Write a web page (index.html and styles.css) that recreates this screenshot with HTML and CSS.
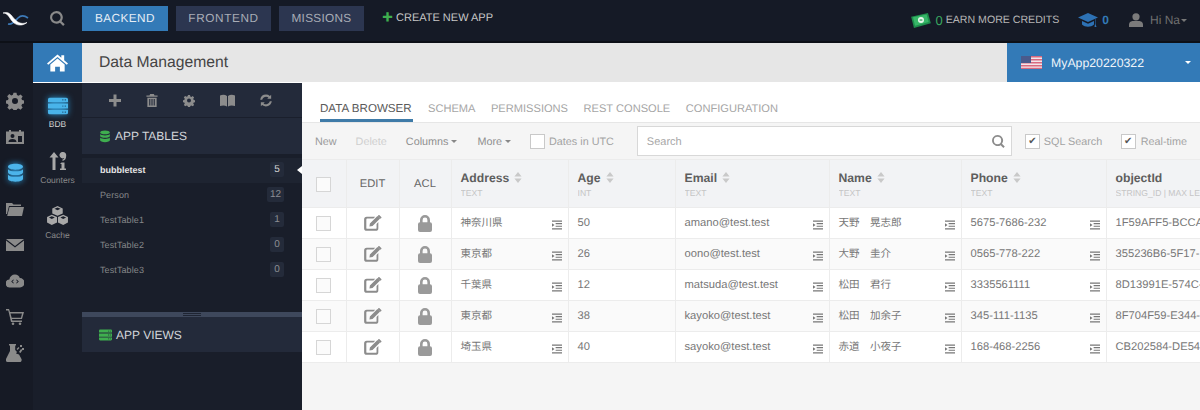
FILE: index.html
```html
<!DOCTYPE html>
<html lang="en">
<head>
<meta charset="utf-8">
<title>Data Management</title>
<link rel="stylesheet" href="styles.css">
</head>
<body>
<svg class="defs" width="0" height="0">
  <symbol id="i-gear" viewBox="0 0 24 24"><path fill-rule="evenodd" d="M10 1h4l.6 3 2.2.9 2.6-1.7 2.8 2.8-1.7 2.6.9 2.2 3 .6v4l-3 .6-.9 2.2 1.700 2.6-2.800 2.800-2.600-1.700-2.200.9-.6 3h-4l-.6-3-2.200-.9-2.600 1.700-2.800-2.800 1.700-2.600-.9-2.200-3-.6v-4l3-.6.9-2.200L1.600 5.600l2.800-2.800 2.600 1.700 2.200-.9zM12 8a4 4 0 1 0 0 8 4 4 0 0 0 0-8z"/></symbol>
  <symbol id="i-db" viewBox="0 0 20 24"><path d="M10 1c5 0 9 1.500 9 3.500S15 8 10 8 1 6.500 1 4.500 5 1 10 1zM1 7.500C2.500 9.500 6 10 10 10s7.500-.5 9-2.500V11c0 2-4 3.500-9 3.500S1 13 1 11zM1 14c1.500 2 5 2.500 9 2.500s7.500-.5 9-2.500v5c0 2-4 3.500-9 3.500S1 21 1 19z"/></symbol>
  <symbol id="i-server" viewBox="0 0 24 20"><path fill-rule="evenodd" d="M2 0h20a2 2 0 0 1 2 2v3.500H0V2a2 2 0 0 1 2-2zM0 7h24v6H0zM0 14.500h24V18a2 2 0 0 1-2 2H2a2 2 0 0 1-2-2zM17 2v1.500h1.500V2zM20 2v1.500h1.500V2zM17 9.300v1.500h1.500V9.300zM20 9.300v1.500h1.500V9.300zM17 16.500V18h1.500v-1.500zM20 16.500V18h1.500v-1.500z"/></symbol>
  <symbol id="i-edit" viewBox="0 0 20 18"><path d="M3 2h9.500l-2 2H3.500a1 1 0 0 0-1 1v9.500a1 1 0 0 0 1 1H13a1 1 0 0 0 1-1V10l2-2v6.800a3 3 0 0 1-3 3H3a3 3 0 0 1-3-3V5a3 3 0 0 1 3-3z"/><path d="M6.500 9.500 15 1l3 3-8.500 8.500L6 13zM16 .2a1 1 0 0 1 1.300 0l2 2a1 1 0 0 1 0 1.300l-.8.800-3-3z"/></symbol>
  <symbol id="i-lock" viewBox="0 0 14 17"><path fill-rule="evenodd" d="M7 0a5 5 0 0 1 5 5v2.200a2 2 0 0 1 2 2V15a2 2 0 0 1-2 2H2a2 2 0 0 1-2-2V9.200a2 2 0 0 1 2-2V5a5 5 0 0 1 5-5zm0 2.600A2.400 2.400 0 0 0 4.600 5v2.200h4.800V5A2.400 2.400 0 0 0 7 2.600z"/></symbol>
  <symbol id="i-indent" viewBox="0 0 11 10"><path d="M0 0h11v1.400H0zM4 2.900h7v1.300H4zM4 5.700h7V7H4zM0 8.600h11V10H0zM0 3l2.800 2L0 7z"/></symbol>
  <symbol id="i-search" viewBox="0 0 16 16"><path fill-rule="evenodd" d="M6.800 0a6.800 6.800 0 0 1 5.500 10.800l3.400 3.400-1.700 1.700-3.400-3.400A6.800 6.800 0 1 1 6.800 0zm0 2.300a4.500 4.500 0 1 0 0 9 4.500 4.500 0 0 0 0-9z"/></symbol>
  <symbol id="i-sort" viewBox="0 0 8 11"><path d="M4 0l3.600 4.500H.4zM4 11 .4 6.500h7.200z"/></symbol>
</svg>

<header class="topbar">
  <svg class="logo" viewBox="0 0 28 16"><path d="M6 14C11 15 13 11 16 8S22 5 26 8" fill="none" stroke="#3d7ab8" stroke-width="1.600"/><path d="M1 3C7 1 9 5 12 8.500S19 15 25 12.500C20 16.500 14 15.500 10.500 11.500S6 3 1 3z" fill="#fff" stroke="#fff" stroke-width=".6"/></svg>
  <svg class="top-search"><use href="#i-search"/></svg>
  <nav class="main-nav">
    <a class="nav-btn nav-active">BACKEND</a>
    <a class="nav-btn nav-front">FRONTEND</a>
    <a class="nav-btn nav-miss">MISSIONS</a>
  </nav>
  <a class="create"><span class="plus">✚</span>CREATE NEW APP</a>
  <div class="top-right">
    <svg class="money" viewBox="0 0 22 16"><path d="M1 4 19 0l3 11-18 5z" fill="#1f8f4d"/><path d="M3 4.500 17.500 1.500l2.200 8-14.500 4z" fill="#37b768"/><circle cx="11.500" cy="7.500" r="3.200" fill="#e9f7ee"/><path d="M10 7.500h3" stroke="#1f8f4d" stroke-width="1.200"/></svg>
    <span class="credit-num">0</span><span class="credit-text">EARN MORE CREDITS</span>
    <svg class="cap" viewBox="0 0 20 15"><path d="M10 0 20 4.500 10 9 0 4.500zM4 8l6 2.700L16 8v3.500c-3 3-9 3-12 0z" fill="#2d72b5"/><path d="M17.500 6v5l1 3h-2l.5-3V6.200z" fill="#2d72b5"/></svg>
    <span class="cap-num">0</span>
    <svg class="user" viewBox="0 0 14 14"><circle cx="7" cy="3.800" r="3.600"/><path d="M0 14v-2.500C0 9 2.500 8 4 8h6c1.500 0 4 1 4 3.500V14z"/></svg>
    <span class="hi">Hi Na</span><span class="caret"></span>
  </div>
</header>

<div class="shell">
  <aside class="rail">
    <svg class="rail-ico"><use href="#i-gear"/></svg>
    <svg class="rail-ico" viewBox="0 0 18 14"><path fill-rule="evenodd" d="M3 0h2v1.500h8V0h2v1.500h3V14H0V1.500h3zM6.500 4a2 2 0 1 0 0 4 2 2 0 0 0 0-4zM2.500 12h8c0-2-1.500-3-4-3s-4 1-4 3zM12 6v6h4V6z"/></svg>
    <svg class="rail-ico rail-on"><use href="#i-db"/></svg>
    <svg class="rail-ico" viewBox="0 0 18 14"><path d="M0 1h6l1.500 1.500H15V4H3L1 12H0z"/><path d="M3.500 5H18l-2 9H1.200z"/></svg>
    <svg class="rail-ico" viewBox="0 0 18 12"><path d="M0 0h18L9 7zM0 1.500V12h18V1.500L9 8.500z"/></svg>
    <svg class="rail-ico" viewBox="0 0 18 13"><path fill-rule="evenodd" d="M9 0a5 5 0 0 1 4.800 3.600A4.500 4.500 0 0 1 14 13H4a4 4 0 0 1-.6-8A5.500 5.500 0 0 1 9 0zM7.300 5 5.200 7l2.100 2 .6-.6L6.400 7l1.500-1.400zM10.700 5l-.6.600L11.600 7l-1.500 1.400.6.600 2.100-2z"/></svg>
    <svg class="rail-ico" viewBox="0 0 18 16"><path fill-rule="evenodd" d="M0 0h3l1 3h14l-2 7H6l.3 1.500H16V13H5L2.300 1.500H0zM4.500 4.500 5.700 8.800h9.200l1.100-4.300z"/><circle cx="7" cy="14.700" r="1.300"/><circle cx="14" cy="14.700" r="1.300"/></svg>
    <svg class="rail-ico" viewBox="0 0 18 18"><path fill-rule="evenodd" d="M3 0h7v1.500h-.8V6L11 8l-1 1.500 3 1L15.500 15c.5 1.500-.2 3-1.700 3H1.500C0 18-.5 16.500 0 15L4 7V1.500H3z"/><path d="M10.500 5l2-2 1 1-2 2zM13 8l2-3 1.500 1-2 3zM14 1h2v2h-2zM16 4h2v2h-2z"/></svg>
  </aside>

  <div class="workspace">
    <div class="headline">
      <div class="home">
        <svg viewBox="0 0 22 18" width="21" height="18"><path d="M11 0l4 3.400V1h3v5l4 3.400-1.300 1.400L11 2.700 1.300 10.800 0 9.400z" fill="#fff"/><path d="M3.500 10.500 11 4.300l7.500 6.200V18h-5v-5h-5v5h-5z" fill="#fff"/></svg>
      </div>
      <h1 class="title">Data Management</h1>
      <div class="app-select">
        <svg class="flag" viewBox="0 0 21 13"><rect width="21" height="13" fill="#f3e6ea"/><path d="M0 0h21v1.500H0zM0 3h21v1.500H0zM0 6h21v1.500H0zM0 9h21v1.500H0zM0 11.700h21V13H0z" fill="#d9697f"/><rect width="10" height="7" fill="#4a5a8c"/></svg>
        <span class="app-name">MyApp20220322</span>
        <span class="caret caret-white"></span>
      </div>
    </div>

    <div class="body-row">
      <nav class="modules">
        <a class="module module-on">
          <svg class="mod-ico"><use href="#i-server"/></svg>
          <span>BDB</span>
        </a>
        <a class="module">
          <svg class="mod-ico" viewBox="0 0 18 18"><path d="M5 0l4.500 5.500H6.500V18h-3V5.500H.5zM14 0a3.200 3.200 0 0 1 3.200 3.500c0 3-1 5-3.700 5.500v-1.500c1-.2 1.500-.8 1.700-1.500A3.200 3.200 0 1 1 14 0zM12.500 10.500h3V16.500H17V18h-6v-1.500h1.500V12H11z"/></svg>
          <span>Counters</span>
        </a>
        <a class="module">
          <svg class="mod-ico mod-cube" viewBox="0 0 22 20"><path fill-rule="evenodd" d="M11 0l5.500 2.600v5.200L11 10.200 5.500 7.800V2.600zM7.800 3 11 4.500 14.200 3 11 1.600zM5 9.200l5.500 2.500v5.600L5 20 0 17.300v-5.600zM2 12.200 5 13.600 8.200 12.200 5 10.800zM17 9.200l5 2.500v5.600L17 20l-5.500-2.700v-5.600zM14 12.200l3 1.400 3.100-1.400L17 10.800z"/></svg>
          <span>Cache</span>
        </a>
      </nav>

      <aside class="tables">
        <div class="tools">
          <svg class="tool" viewBox="0 0 12 12"><path d="M4.500 0h3v4.500H12v3H7.500V12h-3V7.500H0v-3h4.500z"/></svg>
          <svg class="tool" viewBox="0 0 12 14"><path fill-rule="evenodd" d="M4 0h4l.7 1.500H12V3H0V1.500h3.300zM1 4h10v10H1zM3 5.500V12.500h1.200V5.500zM5.400 5.500V12.500h1.200V5.500zM7.800 5.500V12.500H9V5.500z"/></svg>
          <svg class="tool"><use href="#i-gear"/></svg>
          <svg class="tool tool-wide" viewBox="0 0 15 12"><path d="M0 1c2.500-1 5-1 7 .5V12c-2-1.300-4.500-1.300-7-.5zM15 1c-2.500-1-5-1-7 .5V12c2-1.300 4.500-1.300 7-.5z"/></svg>
          <svg class="tool" viewBox="0 0 14 14"><path d="M7 0a7 7 0 0 1 4.500 1.700L13 .3V5H8.400l1.500-1.500A4.700 4.700 0 0 0 2.500 6H.2A7 7 0 0 1 7 0zM1 9h4.600l-1.500 1.500A4.700 4.700 0 0 0 11.500 8h2.300a7 7 0 0 1-11.300 4.300L1 13.700z"/></svg>
        </div>
        <div class="tables-head">
          <svg class="green-ico"><use href="#i-db"/></svg>APP TABLES
        </div>
        <ul class="table-list">
          <li class="table-item item-on"><span>bubbletest</span><b class="count">5</b></li>
          <li class="table-item"><span>Person</span><b class="count">12</b></li>
          <li class="table-item"><span>TestTable1</span><b class="count">1</b></li>
          <li class="table-item"><span>TestTable2</span><b class="count">0</b></li>
          <li class="table-item"><span>TestTable3</span><b class="count">0</b></li>
        </ul>
        <div class="splitter"><i></i></div>
        <div class="tables-head views-head">
          <svg class="green-ico green-wide"><use href="#i-server"/></svg>APP VIEWS
        </div>
      </aside>

      <main class="content">
        <div class="tabs">
          <a class="tab tab-on">DATA BROWSER</a>
          <a class="tab">SCHEMA</a>
          <a class="tab">PERMISSIONS</a>
          <a class="tab">REST CONSOLE</a>
          <a class="tab">CONFIGURATION</a>
        </div>
        <div class="toolbar">
          <span class="tb tb-new">New</span>
          <span class="tb tb-del">Delete</span>
          <span class="tb tb-col">Columns<i class="caret caret-small"></i></span>
          <span class="tb tb-more">More<i class="caret caret-small"></i></span>
          <span class="check"></span><span class="tb">Dates in UTC</span>
          <div class="search"><span class="tb">Search</span><svg class="search-ico"><use href="#i-search"/></svg></div>
          <span class="check check-sql">✔</span><span class="tb">SQL Search</span>
          <span class="check check-rt">✔</span><span class="tb">Real-time</span>
        </div>
        <table class="grid">
          <colgroup>
            <col class="c-check"><col class="c-edit"><col class="c-acl"><col class="c-addr"><col class="c-age"><col class="c-mail"><col class="c-name"><col class="c-phone"><col class="c-id">
          </colgroup>
          <thead>
            <tr>
              <th class="mid"><span class="box"></span></th>
              <th class="mid plain">EDIT</th>
              <th class="mid plain">ACL</th>
              <th><b>Address<svg class="sort"><use href="#i-sort"/></svg></b><small>TEXT</small></th>
              <th><b>Age<svg class="sort"><use href="#i-sort"/></svg></b><small>INT</small></th>
              <th><b>Email<svg class="sort"><use href="#i-sort"/></svg></b><small>TEXT</small></th>
              <th><b>Name<svg class="sort"><use href="#i-sort"/></svg></b><small>TEXT</small></th>
              <th><b>Phone<svg class="sort"><use href="#i-sort"/></svg></b><small>TEXT</small></th>
              <th><b>objectId</b><small>STRING_ID | MAX LE</small></th>
            </tr>
          </thead>
          <tbody>
            <tr>
              <td class="mid"><span class="box"></span></td><td class="mid"><svg class="edit"><use href="#i-edit"/></svg></td><td class="mid"><svg class="lock"><use href="#i-lock"/></svg></td>
              <td><div class="cell"><span class="cjk">神奈川県</span><svg class="indent"><use href="#i-indent"/></svg></div></td>
              <td><div class="cell"><span>50</span></div></td>
              <td><div class="cell"><span>amano@test.test</span><svg class="indent"><use href="#i-indent"/></svg></div></td>
              <td><div class="cell"><span class="cjk">天野　晃志郎</span><svg class="indent"><use href="#i-indent"/></svg></div></td>
              <td><div class="cell"><span>5675-7686-232</span><svg class="indent"><use href="#i-indent"/></svg></div></td>
              <td><div class="cell"><span>1F59AFF5-BCCA</span></div></td>
            </tr>
            <tr>
              <td class="mid"><span class="box"></span></td><td class="mid"><svg class="edit"><use href="#i-edit"/></svg></td><td class="mid"><svg class="lock"><use href="#i-lock"/></svg></td>
              <td><div class="cell"><span class="cjk">東京都</span><svg class="indent"><use href="#i-indent"/></svg></div></td>
              <td><div class="cell"><span>26</span></div></td>
              <td><div class="cell"><span>oono@test.test</span><svg class="indent"><use href="#i-indent"/></svg></div></td>
              <td><div class="cell"><span class="cjk">大野　圭介</span><svg class="indent"><use href="#i-indent"/></svg></div></td>
              <td><div class="cell"><span>0565-778-222</span><svg class="indent"><use href="#i-indent"/></svg></div></td>
              <td><div class="cell"><span>355236B6-5F17-</span></div></td>
            </tr>
            <tr>
              <td class="mid"><span class="box"></span></td><td class="mid"><svg class="edit"><use href="#i-edit"/></svg></td><td class="mid"><svg class="lock"><use href="#i-lock"/></svg></td>
              <td><div class="cell"><span class="cjk">千葉県</span><svg class="indent"><use href="#i-indent"/></svg></div></td>
              <td><div class="cell"><span>12</span></div></td>
              <td><div class="cell"><span>matsuda@test.test</span><svg class="indent"><use href="#i-indent"/></svg></div></td>
              <td><div class="cell"><span class="cjk">松田　君行</span><svg class="indent"><use href="#i-indent"/></svg></div></td>
              <td><div class="cell"><span>3335561111</span><svg class="indent"><use href="#i-indent"/></svg></div></td>
              <td><div class="cell"><span>8D13991E-574C-</span></div></td>
            </tr>
            <tr>
              <td class="mid"><span class="box"></span></td><td class="mid"><svg class="edit"><use href="#i-edit"/></svg></td><td class="mid"><svg class="lock"><use href="#i-lock"/></svg></td>
              <td><div class="cell"><span class="cjk">東京都</span><svg class="indent"><use href="#i-indent"/></svg></div></td>
              <td><div class="cell"><span>38</span></div></td>
              <td><div class="cell"><span>kayoko@test.test</span><svg class="indent"><use href="#i-indent"/></svg></div></td>
              <td><div class="cell"><span class="cjk">松田　加余子</span><svg class="indent"><use href="#i-indent"/></svg></div></td>
              <td><div class="cell"><span>345-111-1135</span><svg class="indent"><use href="#i-indent"/></svg></div></td>
              <td><div class="cell"><span>8F704F59-E344-</span></div></td>
            </tr>
            <tr>
              <td class="mid"><span class="box"></span></td><td class="mid"><svg class="edit"><use href="#i-edit"/></svg></td><td class="mid"><svg class="lock"><use href="#i-lock"/></svg></td>
              <td><div class="cell"><span class="cjk">埼玉県</span><svg class="indent"><use href="#i-indent"/></svg></div></td>
              <td><div class="cell"><span>40</span></div></td>
              <td><div class="cell"><span>sayoko@test.test</span><svg class="indent"><use href="#i-indent"/></svg></div></td>
              <td><div class="cell"><span class="cjk">赤道　小夜子</span><svg class="indent"><use href="#i-indent"/></svg></div></td>
              <td><div class="cell"><span>168-468-2256</span><svg class="indent"><use href="#i-indent"/></svg></div></td>
              <td><div class="cell"><span>CB202584-DE54-</span></div></td>
            </tr>
          </tbody>
        </table>
      </main>
    </div>
  </div>
</div>
</body>
</html>
```
FILE: styles.css
```css
* { box-sizing: border-box; }
html, body { margin: 0; height: 410px; overflow: hidden; }
body {
  width: 1200px;
  background: #191e2a;
  font-family: "Liberation Sans", "Noto Sans CJK JP", sans-serif;
  color: #666;
  text-rendering: geometricPrecision;
}
.defs { display: block; height: 0; }
a { text-decoration: none; }

/* top bar */
.topbar {
  height: 43px;
  background: #151a26;
  border-bottom: 2px solid #0d1017;
  display: flex;
  align-items: flex-start;
}
.logo { width: 28px; height: 16px; margin: 10px 0 0 2px; }
.top-search { width: 15px; height: 15px; margin: 11px 0 0 20px; fill: #8a8a8a; }
.main-nav { display: flex; gap: 8px; margin: 6px 0 0 17px; }
.nav-btn {
  height: 25px;
  line-height: 25px;
  text-align: center;
  font-size: 11.800px;
  letter-spacing: .6px;
  color: #a9adb6;
  background: #2c3650;
}
.nav-active { width: 86px; background: #337ab7; color: #e6eef6; letter-spacing: .4px; }
.nav-front { width: 95px; }
.nav-miss { width: 85px; letter-spacing: .3px; }
.create {
  margin: 6px 0 0 18px;
  height: 25px;
  line-height: 25px;
  font-size: 11px;
  color: #c8c8c8;
  display: flex;
}
.plus { color: #3fae4f; font-size: 11px; margin-right: 3px; }
.top-right {
  margin-left: auto;
  padding: 12px 13px 0 0;
  display: flex;
  align-items: center;
  height: 28px;
  font-size: 10.600px;
}
.money { width: 21px; height: 15px; }
.credit-num { color: #3aa860; font-size: 13px; margin-left: 4px; }
.credit-text { color: #b5b5b5; margin-left: 3px; }
.cap { width: 20px; height: 15px; margin-left: 19px; }
.cap-num { color: #337ab7; font-size: 12px; font-weight: bold; margin-left: 4px; }
.user { width: 14px; height: 14px; margin-left: 20px; fill: #7b7b7b; }
.hi { color: #6f6f6f; font-size: 12px; margin-left: 7px; }
.caret {
  display: inline-block;
  border-top: 3px solid #777;
  border-left: 3px solid transparent;
  border-right: 3px solid transparent;
  margin-left: 1px;
}
.caret-white { border-top-color: #fff; margin-left: auto; }
.caret-small { border-top-color: #888; margin-left: 3px; vertical-align: middle; }

/* shell */
.shell { display: flex; height: 367px; }
.rail {
  width: 33px;
  padding-top: 40px;
  display: flex;
  flex-direction: column;
  align-items: center;
  background: #161a25;
  flex: none;
}
.rail-ico { width: 18px; height: 18px; margin: 9px 0 9px -3px; fill: #8a8a8a; }
.rail-on { fill: #4cb4ea; width: 17px; height: 20px; margin: 8px 0 8px -3px; filter: drop-shadow(0 0 3px #2d9ad8); }
.workspace { flex: 1; min-width: 0; display: flex; flex-direction: column; }
.headline { display: flex; height: 40px; background: #e6e6e6; border-bottom: 1px solid #fff; align-items: stretch; }
.home { width: 49px; background: #337ab7; display: flex; align-items: center; justify-content: center; }
.title { margin: 0 0 0 17px; font-size: 15.700px; font-weight: normal; color: #444; line-height: 39px; flex: 1; }
.app-select {
  width: 193px;
  background: #337ab7;
  display: flex;
  align-items: center;
  padding: 0 9px 0 14px;
  color: #eef4fa;
  font-size: 12.300px;
}
.flag { width: 21px; height: 13px; }
.app-name { margin-left: 9px; }
.body-row { flex: 1; min-height: 0; display: flex; }

/* modules */
.modules {
  width: 49px;
  flex: none;
  background: #191e2a;
  display: flex;
  flex-direction: column;
  align-items: center;
  padding-top: 13px;
}
.module { height: 55px; display: flex; flex-direction: column; align-items: center; font-size: 8.500px; color: #8a8a8a; }
.module span { margin-top: 4px; }
.module:nth-child(n+2) span { margin-top: 5px; }
.mod-ico { width: 20px; height: 18px; fill: #a8a8a8; margin-top: 1px; }
.mod-cube { width: 21px; height: 19px; margin-top: 0; }
.module-on { color: #d5d5d5; }
.module-on .mod-ico { fill: #49b4ea; filter: drop-shadow(0 0 3px #2d9ad8); }

/* table panel */
.tables { width: 220px; flex: none; background: #191e2a; position: relative; }
.tools { height: 35px; background: #232a3a; border-bottom: 1px solid #1a1f2c; display: flex; align-items: center; padding-left: 27px; gap: 25px; }
.tool { width: 12px; height: 13px; fill: #8c8c8c; }
.tool-wide { width: 15px; }
.tables-head {
  height: 36px;
  background: #232a3a;
  color: #d2d5d9;
  font-size: 12px;
  display: flex;
  align-items: center;
  padding-left: 17px;
}
.green-ico { width: 12px; height: 13px; fill: #3fae4f; margin-right: 4px; }
.green-wide { width: 13px; height: 12px; }
.table-list { list-style: none; margin: 4px 0 0; padding: 0; height: 154px; }
.table-item {
  height: 25px;
  padding: 0 18px 2px;
  display: flex;
  justify-content: space-between;
  align-items: center;
  font-size: 9px;
  letter-spacing: .1px;
  color: #858789;
}
.item-on { background: #1e2431; color: #e4e4e4; font-weight: bold; position: relative; letter-spacing: 0; }
.item-on::after {
  content: "";
  position: absolute;
  right: 0;
  top: 8px;
  border: 4px solid transparent;
  border-right: 5px solid #fff;
  border-left: 0;
}
.count {
  min-width: 14px;
  height: 15px;
  line-height: 15px;
  padding: 0 3px;
  border-radius: 2px;
  background: #242b3a;
  text-align: center;
  font-weight: normal;
  font-size: 10px;
  letter-spacing: 0;
  color: #8c8e92;
}
.item-on .count { color: #d8d8d8; }
.splitter { height: 5px; background: #3e485c; display: flex; justify-content: center; }
.splitter i { width: 18px; height: 3px; border-top: 1px solid #1f2533; border-bottom: 1px solid #1f2533; margin-top: 1px; }
.views-head { height: 35px; }

/* content */
.content { flex: 1; min-width: 0; background: #f5f5f5; overflow: hidden; }
.tabs {
  height: 39px;
  background: #fff;
  display: flex;
  gap: 15.500px;
  padding: 0 0 0 18px;
  align-items: flex-end;
}
.tab { font-size: 11.100px; color: #a5a5a5; height: 24px; line-height: 14px; padding-top: 4px; }
.tab-on { font-size: 11.600px; color: #5a5a5a; border-bottom: 3px solid #3f7ba8; width: 92.500px; white-space: nowrap; }
.toolbar {
  height: 38px;
  display: flex;
  align-items: center;
  border-top: 1px solid #e6e6e6;
  border-bottom: 1px solid #ececec;
  padding-left: 13px;
  font-size: 10.800px;
  color: #a3a3a3;
}
.tb { white-space: nowrap; padding-top: 1px; }
.tb-del { margin-left: 19px; color: #cfcfcf; }
.tb-col { margin-left: 19px; color: #8f8f8f; }
.tb-more { margin-left: 20px; color: #8f8f8f; }
.tb-new { color: #999; }
.check {
  width: 15px;
  height: 15px;
  margin-left: 19px;
  background: #fff;
  border: 1px solid #c9c9c9;
  margin-right: 4px;
  flex: none;
  font-size: 10px;
  line-height: 13px;
  text-align: center;
  color: #555;
}
.check-sql { margin-left: 13px; }
.check-rt { margin-left: 18.500px; margin-right: 5px; }
.search {
  width: 375px;
  height: 30px;
  margin: 0 0 0 23px;
  background: #fff;
  border: 1px solid #d8d8d8;
  display: flex;
  align-items: center;
  justify-content: space-between;
  padding: 0 6px 0 9px;
  color: #a8a8a8;
  font-size: 11px;
  flex: none;
}
.search-ico { width: 13px; height: 13px; fill: #8c8c8c; }

/* data grid */
.grid { border-collapse: collapse; table-layout: fixed; width: 898px; }
.c-check { width: 44px; }
.c-edit { width: 53px; }
.c-acl { width: 52px; }
.c-addr { width: 117px; }
.c-age { width: 107px; }
.c-mail { width: 154px; }
.c-name { width: 132px; }
.c-phone { width: 145px; }
.c-id { width: 94px; }
.grid th, .grid td { border: 1px solid #ececec; border-top: 0; padding: 0 0 0 9px; overflow: hidden; white-space: nowrap; }
.grid th:first-child, .grid td:first-child { border-left: 0; }
.grid th:last-child, .grid td:last-child { border-right: 0; }
.grid thead tr { height: 47px; background: #f2f3f5; }
.grid tbody tr { height: 31px; background: #fff; }
.grid tbody tr:nth-child(even) { background: #fafafa; }
.grid th { text-align: left; font-weight: normal; vertical-align: middle; padding-top: 3px; }
.grid th b { display: block; font-size: 12.200px; color: #5e5e5e; line-height: 15px; }
.grid th small { display: block; font-size: 8.600px; color: #c5c5c5; line-height: 12px; margin-top: 1px; overflow: hidden; }
.grid .mid { padding: 2px 0 0; text-align: center; vertical-align: middle; }
.grid .plain { font-size: 11.200px; color: #666; }
.box { display: inline-block; width: 15px; height: 15px; border: 1px solid #d6d6d6; background: #fbfbfb; vertical-align: middle; }
.sort { width: 8px; height: 11px; margin-left: 5px; fill: #c9c9c9; vertical-align: -1px; }
.edit { width: 18px; height: 16px; fill: #8c8c8c; vertical-align: middle; }
.lock { width: 14px; height: 17px; fill: #9a9a9a; vertical-align: middle; }
.cell { display: flex; justify-content: space-between; align-items: center; padding-right: 6px; font-size: 11.200px; color: #777; }
.cjk { font-size: 10.500px; }
.indent { width: 10px; height: 10px; fill: #777; flex: none; margin-top: 4px; }
```
